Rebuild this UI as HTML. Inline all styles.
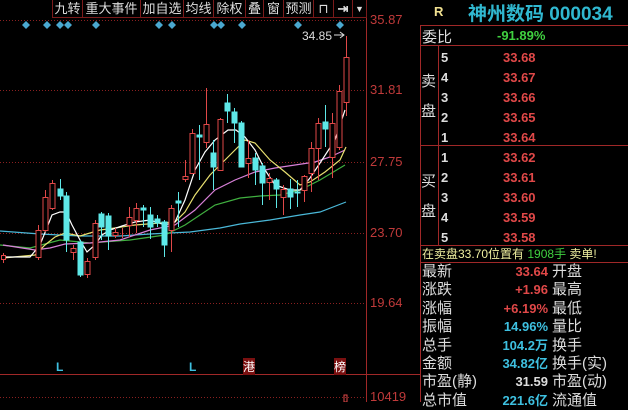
<!DOCTYPE html>
<html><head><meta charset="utf-8"><style>
body{margin:0;background:#000;width:628px;height:402px;overflow:hidden;position:relative;font-family:"Liberation Sans","Noto Sans CJK SC",sans-serif}
.a{position:absolute;white-space:nowrap}
.tb{position:absolute;top:0;height:18px;border:1px solid #7a1a1a;border-top:none;color:#ddd;font-size:13px;line-height:18px;text-align:center;box-sizing:border-box}
.ax{position:absolute;left:370px;color:#c03a3a;font-size:13px}
.r{color:#e04848;font-weight:bold;font-size:13px}
.l{color:#ddd;font-size:15px}
.n{color:#ddd;font-size:13px;font-weight:bold}
.c{color:#3ec0e0;font-weight:bold;font-size:13px}
</style></head><body>
<svg width="628" height="402" style="position:absolute;left:0;top:0">
<g stroke="#8a2020" stroke-dasharray="1,2" stroke-width="1">
<line x1="0" y1="20.5" x2="366" y2="20.5"/><line x1="0" y1="90.5" x2="366" y2="90.5"/><line x1="0" y1="162.5" x2="366" y2="162.5"/><line x1="0" y1="233.5" x2="366" y2="233.5"/><line x1="0" y1="303.5" x2="366" y2="303.5"/><line x1="0" y1="397.5" x2="366" y2="397.5"/>
</g>
<line x1="366.5" y1="0" x2="366.5" y2="402" stroke="#a02828"/>
<line x1="0" y1="374.5" x2="420" y2="374.5" stroke="#a02828"/>
<g fill="#4aa8d0" transform="translate(0,1)">
<path d="M26 20l4 4-4 4-4-4z"/><path d="M47 20l4 4-4 4-4-4z"/><path d="M60 20l4 4-4 4-4-4z"/><path d="M68 20l4 4-4 4-4-4z"/><path d="M96 20l4 4-4 4-4-4z"/><path d="M159 20l4 4-4 4-4-4z"/><path d="M172 20l4 4-4 4-4-4z"/><path d="M214 20l4 4-4 4-4-4z"/><path d="M221 20l4 4-4 4-4-4z"/><path d="M242 20l4 4-4 4-4-4z"/><path d="M298 20l4 4-4 4-4-4z"/><path d="M340 20l4 4-4 4-4-4z"/>
</g>
<g fill="none" stroke-width="1.2">
<polyline stroke="#4ab8d8" points="0,231 40,234 80,236 120,236 150,234 190,232 220,228 240,224 270,220 300,215 320,212 346,202"/>
<polyline stroke="#40b040" points="0,245 30,248 60,240 90,243 130,240 165,235 185,225 215,205 240,198 260,196 280,195 300,190 320,180 345,165"/>
<polyline stroke="#d880d8" points="3,245 35,250 50,248 65,244 90,243 120,240 150,230 175,225 195,210 215,190 235,180 255,172 275,168 295,165 315,162 330,157 345,150"/>
<polyline stroke="#e8e070" points="3,258 35,255 45,245 55,237 65,233 80,236 100,230 115,228 135,225 160,223 175,222 185,212 195,195 210,175 230,155 245,140 255,143 270,160 285,172 300,185 310,182 325,172 340,160 346,147"/>
<polyline stroke="#fff" points="3,257 30,257 40,245 52,215 60,212 66,212 72,225 80,240 87,252 95,245 102,235 110,230 122,226 135,222 150,220 165,225 175,222 185,200 195,170 205,152 215,140 228,130 236,130 245,137 255,150 265,170 275,185 290,190 300,190 310,178 322,160 335,140 345,110"/>
</g>
<g stroke="#e04848" fill="#000" stroke-width="1">
<path d="M3.5 253v10M38.5 225v35M45.5 190v42M52.5 180v30M73.5 245v15M87.5 258v20M95.5 220v40M115.5 228v10M122.5 228v10M129.5 207v30M136.5 203v30M171.5 205v47M185.5 160v22M192.5 129v45M206.5 88v60M220.5 118v52M248.5 140v38M269.5 173v27M283.5 185v30M304.5 175v27M311.5 142v50M318.5 118v62M332.5 113v65M339.5 85v65M346.5 36v80"/>
<rect x="1.5" y="255.5" width="4" height="4"/><rect x="36" y="230.5" width="5" height="27"/><rect x="43" y="197.5" width="5" height="33"/><rect x="50" y="183.5" width="5" height="25"/><rect x="71" y="248.5" width="5" height="4"/><rect x="85" y="261.5" width="5" height="13"/><rect x="93" y="223.5" width="5" height="34"/><rect x="113" y="232.5" width="5" height="3"/><rect x="127" y="217.5" width="5" height="8"/><rect x="134" y="208.5" width="5" height="12"/><rect x="169" y="208.5" width="5" height="22"/><rect x="183" y="176.5" width="5" height="3"/><rect x="190" y="133.5" width="5" height="40"/><rect x="204" y="124.5" width="5" height="18"/><rect x="218" y="119.5" width="5" height="51"/><rect x="246" y="158.5" width="5" height="5"/><rect x="267" y="178.5" width="5" height="4"/><rect x="281" y="189.5" width="5" height="8"/><rect x="302" y="176.5" width="5" height="14"/><rect x="309" y="148.5" width="5" height="25"/><rect x="316" y="123.5" width="5" height="25"/><rect x="330" y="123.5" width="5" height="34"/><rect x="337" y="91.5" width="5" height="56"/><rect x="344" y="57.5" width="5" height="45"/>
</g>
<g stroke="#5ee8e8" fill="#5ee8e8">
<path d="M60.5 179v21M66.5 192v60M80.5 240v37M101.5 212v28M108.5 213v37M143.5 205v22M150.5 207v32M157.5 215v12M164.5 220v37M178.5 192v35M199.5 125v55M213.5 140v50M227.5 94v29M234.5 108v35M241.5 121v45M255.5 153v32M262.5 163v42M276.5 178v30M290.5 179v30M297.5 180v27M325.5 105v42"/>
<rect x="58" y="189" width="5" height="7"/><rect x="64" y="196" width="5" height="44"/><rect x="78" y="242" width="5" height="33"/><rect x="99" y="214" width="5" height="13"/><rect x="106" y="216" width="5" height="20"/><rect x="141" y="208" width="5" height="2"/><rect x="148" y="215" width="5" height="12"/><rect x="155" y="219" width="5" height="4"/><rect x="162" y="222" width="5" height="23"/><rect x="176" y="201" width="5" height="2"/><rect x="197" y="135" width="5" height="2"/><rect x="211" y="153" width="5" height="14"/><rect x="225" y="103" width="5" height="8"/><rect x="232" y="112" width="5" height="11"/><rect x="239" y="123" width="5" height="44"/><rect x="253" y="158" width="5" height="12"/><rect x="260" y="166" width="5" height="17"/><rect x="274" y="180" width="5" height="9"/><rect x="288" y="189" width="5" height="8"/><rect x="295" y="192" width="5" height="1"/><rect x="323" y="122" width="5" height="7"/>
</g>
<path d="M334 35h10M340 32l4 3-4 3" stroke="#ddd" fill="none"/>
<rect x="344" y="395" width="3" height="7" fill="none" stroke="#e04848"/>
<g stroke="#a02828" fill="none">
<line x1="420.5" y1="25" x2="420.5" y2="402"/><line x1="420" y1="25.5" x2="628" y2="25.5"/>
<line x1="420" y1="45.5" x2="628" y2="45.5"/><line x1="420" y1="145.5" x2="628" y2="145.5"/><line x1="420" y1="245.5" x2="628" y2="245.5"/><line x1="420" y1="262.5" x2="628" y2="262.5"/>
<line x1="438.5" y1="45" x2="438.5" y2="245"/>
</g>
</svg>
<div class="tb" style="left:52px;width:31px">九转</div>
<div class="tb" style="left:82px;width:59px">重大事件</div>
<div class="tb" style="left:140px;width:44px">加自选</div>
<div class="tb" style="left:183px;width:31px">均线</div>
<div class="tb" style="left:213px;width:33px">除权</div>
<div class="tb" style="left:245px;width:19px">叠</div>
<div class="tb" style="left:263px;width:21px">窗</div>
<div class="tb" style="left:283px;width:31px">预测</div>
<div class="tb" style="left:313px;width:21px">⊓</div>
<div class="tb" style="left:333px;width:20px;font-weight:bold">⇥</div>
<div class="tb" style="left:352px;width:15px;font-size:9px">▼</div>
<div class="a" style="left:302px;top:29px;color:#ddd;font-size:12px">34.85</div>
<div class="ax" style="top:12px">35.87</div><div class="ax" style="top:82px">31.81</div><div class="ax" style="top:154px">27.75</div><div class="ax" style="top:225px">23.70</div><div class="ax" style="top:295px">19.64</div><div class="ax" style="top:389px">10419</div>
<div class="a" style="left:56px;top:360px;color:#3ec0e0;font-size:12px;font-weight:bold">L</div>
<div class="a" style="left:189px;top:360px;color:#3ec0e0;font-size:12px;font-weight:bold">L</div>
<div class="a" style="left:243px;top:358px;color:#fff;font-size:12px;background:#7a1010">港</div>
<div class="a" style="left:334px;top:358px;color:#fff;font-size:12px;background:#7a1010">榜</div>
<div class="a" style="left:434px;top:4px;color:#f0e090;font-size:13px;font-weight:bold">R</div>
<div class="a" style="left:468px;top:-1px;color:#30b8d0;font-size:19px;font-weight:bold">神州数码 000034</div>
<div class="a l" style="left:422px;top:26px">委比</div>
<div class="a" style="left:497px;top:28px;color:#40d040;font-size:13px;font-weight:bold">-91.89%</div>
<div class="a l" style="left:421px;top:67px;line-height:30px">卖<br>盘</div>
<div class="a l" style="left:421px;top:167px;line-height:30px">买<br>盘</div>
<div class="a n" style="left:441px;top:48px;line-height:20px">5<br>4<br>3<br>2<br>1<br>1<br>2<br>3<br>4<br>5</div>
<div class="a r" style="left:503px;top:48px;line-height:20px">33.68<br>33.67<br>33.66<br>33.65<br>33.64<br>33.62<br>33.61<br>33.60<br>33.59<br>33.58</div>
<div class="a" style="left:422px;top:245px;font-size:12px;color:#f0f0a0">在卖盘33.70位置有 <span style="color:#40d040">1908手</span> 卖单!</div>
<div class="a l" style="left:422px;top:263px;line-height:18.4px">最新<br>涨跌<br>涨幅<br>振幅<br>总手<br>金额<br>市盈(静)<br>总市值</div>
<div class="a" style="left:460px;top:263px;width:88px;text-align:right;line-height:18.4px;font-size:13px;font-weight:bold"><span style="color:#e04848">33.64<br>+1.96<br>+6.19%</span><br><span style="color:#3ec0e0">14.96%<br>104.2万<br>34.82亿</span><br><span style="color:#ddd">31.59</span><br><span style="color:#3ec0e0">221.6亿</span></div>
<div class="a l" style="left:552px;top:263px;line-height:18.4px">开盘<br>最高<br>最低<br>量比<br>换手<br>换手(实)<br>市盈(动)<br>流通值</div>
</body></html>
